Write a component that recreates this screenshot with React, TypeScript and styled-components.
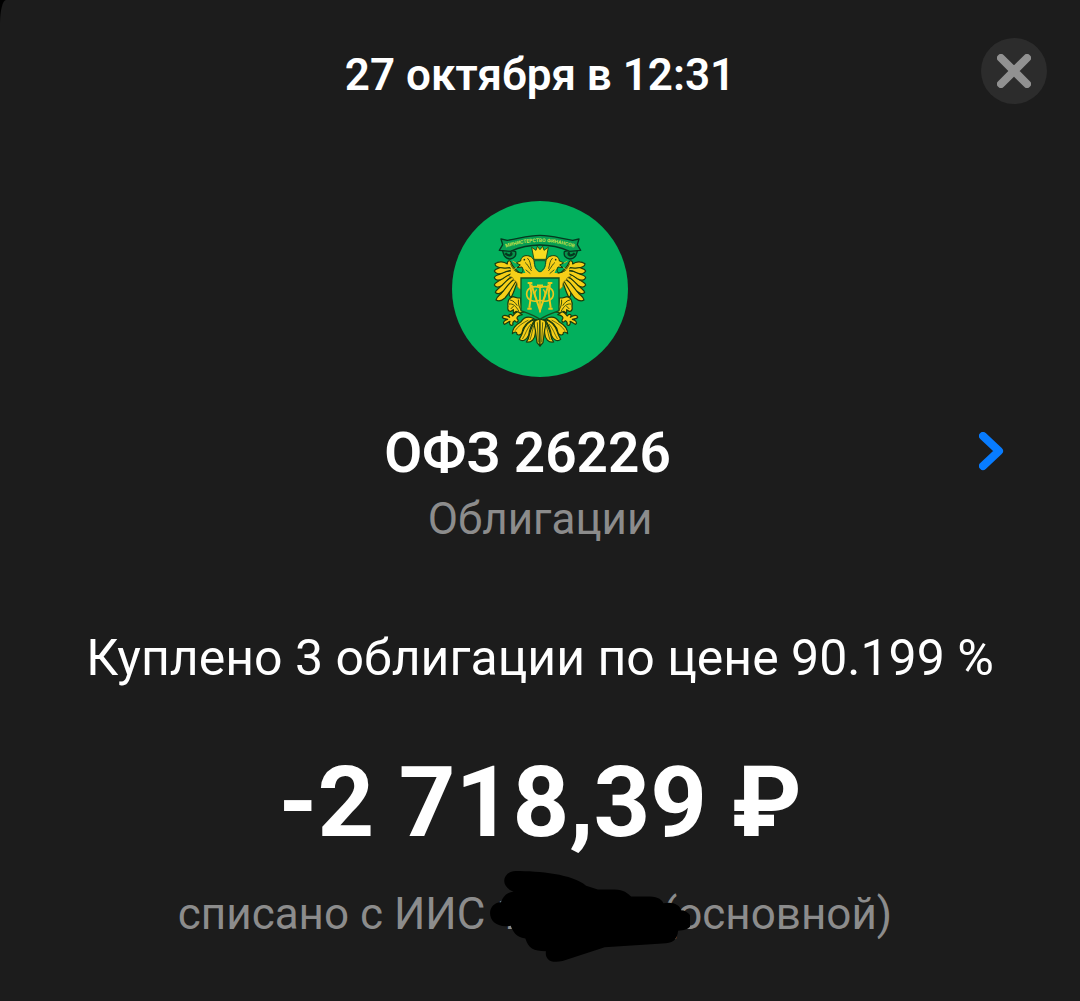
import React from 'react';
import styled, { createGlobalStyle } from 'styled-components';

const GlobalStyle = createGlobalStyle`
  * { box-sizing: border-box; }
  body {
    margin: 0;
    background: #000;
    font-family: Roboto, "Noto Sans", sans-serif;
  }
`;

const Sheet = styled.main`
  display: flex;
  flex-direction: column;
  min-height: 100vh;
  background: #1c1c1c;
  border-top-left-radius: 6px 24px;
  color: #fff;
  text-align: center;
`;

const Header = styled.header`
  display: grid;
  grid-template-columns: 66px 1fr 66px;
  align-items: center;
  padding: 38px 33px 0;
`;

const DateTitle = styled.h1`
  grid-column: 2;
  margin: 0;
  padding-top: 8px;
  font-size: 44px;
  line-height: 56px;
  font-weight: 600;
`;

const CloseButton = styled.button`
  display: grid;
  place-items: center;
  width: 66px;
  height: 66px;
  padding: 0;
  border: 0;
  border-radius: 50%;
  background: #2c2c2c;
  cursor: pointer;
`;

const Emblem = styled.svg`
  display: block;
  width: 176px;
  height: 176px;
  margin: 97px auto 0;
`;

const AssetLink = styled.a`
  display: grid;
  grid-template-columns: 1fr 26px;
  align-items: center;
  margin-top: 40px;
  padding: 0 75px 0 76px;
  color: #fff;
  text-decoration: none;
`;

const AssetName = styled.h2`
  margin: 0;
  font-size: 55px;
  line-height: 72px;
  font-weight: 600;
`;

const Muted = styled.p`
  margin: 0;
  color: #8c8c8c;
  font-size: 44px;
  line-height: 60px;
`;

const Deal = styled.p`
  margin: 77px 0 0;
  font-size: 50px;
  line-height: 64px;
`;

const Amount = styled.p`
  margin: 52px 0 0;
  font-size: 99px;
  line-height: 120px;
  font-weight: 700;
`;

const Account = styled(Muted)`
  margin-top: 22px;
  padding-right: 10px;
  white-space: pre;
`;

const HiddenNumber = styled.span`
  position: relative;
  display: inline-block;
  width: 155px;
  text-align: left;
`;

const Scribble = styled.svg`
  position: absolute;
  left: -6px;
  top: -14px;
  width: 200px;
  height: 94px;
`;

const OUTLINE = '#1b3a0c';

const wingFeathers = [
  'M240 262 C226 282 224 306 213 322 C207 319 206 310 211 298 C213 284 224 270 240 262',
  'M240 260 C222 276 214 304 195 324 C187 331 177 335 168 330 C169 320 180 316 186 307 C196 290 214 268 240 260',
  'M240 256 C216 266 204 286 190 303 C182 311 172 314 166 307 C167 300 176 297 182 289 C194 272 214 258 240 256',
  'M240 252 C214 254 202 270 187 285 C178 293 167 294 163 285 C164 278 173 276 180 270 C194 257 214 248 240 252',
  'M240 250 C216 246 202 256 188 266 C177 273 167 272 163 263 C164 256 174 256 181 251 C196 241 220 240 240 250',
  'M240 250 C224 238 206 240 190 248 C178 254 167 252 163 243 C166 236 175 236 183 231 C202 224 226 236 240 250',
  'M244 252 C228 247 216 240 209 233 C196 236 178 233 172 230 C167 228 165 224 165 221 C176 213 192 214 202 222 C201 212 209 209 213 217 C219 234 232 244 244 252',
];

const tailFeathers = [
  'M282 386 C262 376 250 384 243 395 C229 403 217 415 217 431 C224 424 231 424 231 433 C238 438 247 432 247 424 C250 408 262 396 282 386',
  'M286 388 C266 392 254 408 248 426 C246 434 242 441 238 448 C248 457 261 448 266 436 C268 420 274 402 286 388',
  'M289 388 C276 404 272 420 268 434 C267 444 263 451 259 456 C275 459 285 446 286 430 C287 414 290 400 289 388',
];

function HalfEagle() {
  return (
    <g fill="#f6cf18" stroke={OUTLINE} strokeWidth="3.5" strokeLinejoin="round" strokeLinecap="round">
      {wingFeathers.map((d) => <path key={d} d={d} />)}
      <path stroke="none" d="M300 268 V246 L268 248 L242 250 C226 247 218 238 212 230 C212 244 214 250 208 260 C215 260 220 262 222 272 C228 272 232 276 232 290 C236 296 240 298 243 298 V266 Z" />
      <path fill="none" stroke="#8a7414" strokeWidth="2.4" d="M208 260 C215 260 220 262 222 272 C228 272 232 276 232 290 C236 296 240 298 243 298" />
      <path fill="none" strokeWidth="2.6" d="M212 222 C218 239 230 248 246 249" />
      <path
        stroke="none"
        d="M258 256 C256 244 250 236 246 231 L231 233 L241 225 L229 219 C235 215 239 214 242 213 C243 201 252 196 262 197 C275 198 284 208 283 220 C282 231 285 238 296 246 L300 260 Z"
      />
      <path
        fill="none"
        strokeWidth="3"
        d="M244 249 C250 246 250 238 246 231 L231 233 L241 225 L229 219 C235 215 239 214 242 213 C243 201 252 196 262 197 C275 198 284 208 283 220"
      />
      <path fill="none" stroke="#e9bd1c" strokeWidth="2.5" d="M228 219 L219 214 M229 233 L221 239" />
      <circle cx="253" cy="209" r="2.5" fill={OUTLINE} stroke="none" />
      <path fill="none" strokeWidth="2.4" d="M263 205 C272 213 270 223 274 235 M256 218 C263 223 265 231 274 242 M258 240 L270 250" />
      <path
        d="M219 320 C207 323 202 335 204 350 C202 358 205 365 213 364 L220 359 L220 370 L229 364 L232 375 L239 369 L252 366 C245 356 242 346 242 324 L233 324 Z"
      />
      <path fill="none" strokeWidth="2.6" d="M211 330 C219 331 226 338 231 346 M208 342 C219 340 228 348 236 363 M213 356 L220 349 M235 330 C234 343 238 354 246 364" />
      <path
        d="M234 365 C224 367 222 374 218 378 C213 369 202 374 209 382 C199 374 188 374 187 382 C190 387 197 386 203 388 C193 390 187 398 193 403 C200 401 204 395 210 394 C206 402 213 410 219 404 C217 398 220 394 224 392 C231 400 237 395 233 388 C228 383 233 376 247 374 Z"
      />
      {tailFeathers.map((d) => <path key={d} d={d} />)}
      <path fill="none" strokeWidth="2" d="M264 391 C247 399 234 409 226 421 M272 403 C260 417 256 434 248 446 M281 408 C276 424 275 438 270 449" />
      <path d="M287 391 C280 396 283 410 286 420 L291 458 L300 468 L300 387 Z" />
      <path fill="none" strokeWidth="2.2" d="M292 398 L295 456" />
    </g>
  );
}

function MinistryEmblem() {
  return (
    <Emblem viewBox="36 33 528 528" role="img" aria-label="Министерство финансов">
      <circle cx="300" cy="297" r="264" fill="#02b05d" />
      <HalfEagle />
      <g transform="translate(600 0) scale(-1 1)">
        <HalfEagle />
      </g>
      <path
        d="M282 208 L275 172 L288 181 L292 169 L300 179 L308 169 L312 181 L325 172 L318 208 Z"
        fill="#f9dc20"
        stroke={OUTLINE}
        strokeWidth="2.5"
        strokeLinejoin="round"
      />
      <path d="M284 212 H316 C318 228 313 238 300 246 C287 238 282 228 284 212 Z" fill="#02b05d" stroke="#15512a" strokeWidth="3" />
      <g fill="#06934a" stroke="#05381f" strokeWidth="4" strokeLinejoin="round">
        <path d="M187 178 C190 194 194 207 211 207 C225 205 229 196 227 185 L211 180 Z" />
        <path d="M413 178 C410 194 406 207 389 207 C375 205 371 196 373 185 L389 180 Z" />
        <path d="M196 190 C207 202 221 193 211 188 M404 190 C393 202 379 193 389 188" strokeWidth="7" />
        <path d="M183 147 L202 151 C240 145 265 136 300 136 C335 136 360 145 398 151 L417 147 L412 164 L422 181 L389 184 C359 171 331 165 300 165 C269 165 241 171 211 184 L178 181 L188 164 Z" fill="#079e52" />
      </g>
      <path id="ribbon-line" d="M194 174 C230 162 266 156 300 156 C334 156 370 162 406 174" fill="none" />
      <text fontSize="15" fontWeight="700" fill="#c3e04a" textAnchor="middle">
        <textPath href="#ribbon-line" startOffset="50%">МИНИСТЕРСТВО ФИНАНСОВ</textPath>
      </text>
      <path d="M243 264 H357 V362 C338 369 316 376 300 388 C284 376 262 369 243 362 Z" fill="#02b05d" stroke="#174f1c" strokeWidth="4" />
      <g fill="none" stroke="#ecc81d" strokeWidth="6">
        <path d="M263 279 H277 M270 280 L274 310 L268 353 M262 356 H275 M323 279 H337 M330 280 L326 310 L332 353 M325 356 H338" />
        <path d="M274 284 L300 361 L326 284" />
        <path d="M300 288 V367 M291 286 H309" strokeWidth="5" />
        <path d="M300 292 C278 286 260 295 260 312 C260 330 279 338 300 331 C321 338 340 330 340 312 C340 295 322 286 300 292" strokeWidth="5" />
        <path d="M290 298 C283 307 283 319 290 329 M310 298 C317 307 317 319 310 329" strokeWidth="4" />
      </g>
    </Emblem>
  );
}

export default function App() {
  return (
    <>
      <GlobalStyle />
      <Sheet>
        <Header>
          <DateTitle>27 октября в 12:31</DateTitle>
          <CloseButton type="button" aria-label="Закрыть">
            <svg width="34" height="34" viewBox="0 0 34 34" aria-hidden="true">
              <path d="M4 4 L30 30 M30 4 L4 30" stroke="#919191" strokeWidth="8" strokeLinecap="round" />
            </svg>
          </CloseButton>
        </Header>

        <MinistryEmblem />

        <AssetLink href="#asset">
          <AssetName>ОФЗ 26226</AssetName>
          <svg width="26" height="42" viewBox="0 0 26 42" aria-hidden="true">
            <path d="M4 4 L20 19 L4 34" fill="none" stroke="#087cff" strokeWidth="8" strokeLinecap="round" strokeLinejoin="round" />
          </svg>
        </AssetLink>
        <Muted>Облигации</Muted>

        <Deal>Куплено 3 облигации по цене 90.199 %</Deal>
        <Amount>-2 718,39 ₽</Amount>
        <Account>
          {'списано с ИИС '}
          <HiddenNumber>
            1
            <Scribble viewBox="0 0 204 96" aria-hidden="true">
              <path d="M26 1 C50 1 84 4 98 16 L110 20 H127 C137 20 140 24 144 27 H163 C172 27 176 31 177 34 C187 32 194 36 195 41 C207 41 214 62 192 62 C191 72 186 75 176 75 L117 79 L74 93 C60 96 56 90 57 83 C44 83 39 80 36 70 C26 68 24 64 21 57 C-4 61 -6 34 11 33 C14 25 18 23 24 22 C9 17 13 1 26 1 Z" />
            </Scribble>
          </HiddenNumber>
          {' (основной)'}
        </Account>
      </Sheet>
    </>
  );
}
